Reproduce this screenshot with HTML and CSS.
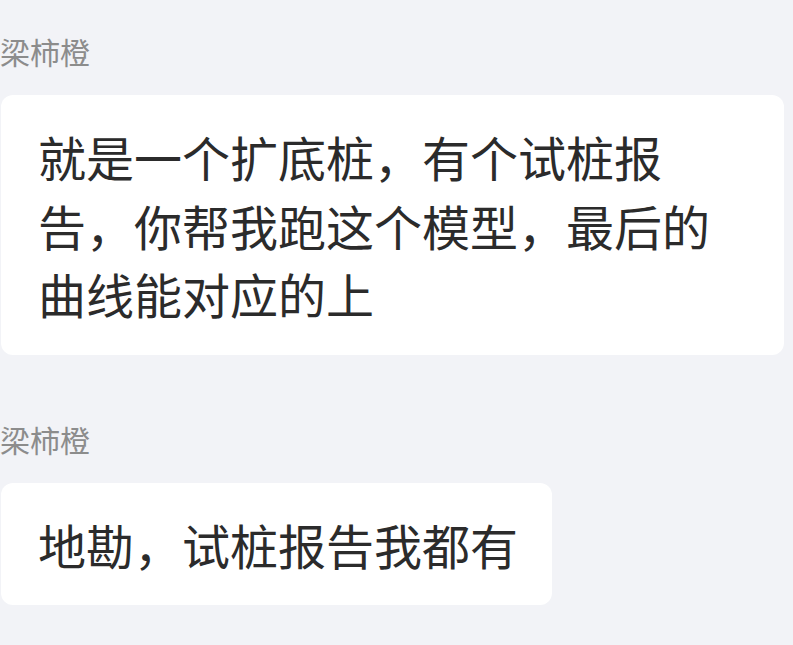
FILE: index.html
```html
<!DOCTYPE html>
<html lang="zh-CN">
<head>
<meta charset="utf-8">
<title>Chat</title>
<link rel="stylesheet" href="styles.css">
</head>
<body>
<div class="chat">
  <div class="msg">
    <div class="name">梁柿橙</div>
    <div class="bubble">就是一个扩底桩，有个试桩报告，你帮我跑这个模型，最后的曲线能对应的上</div>
  </div>
  <div class="msg">
    <div class="name">梁柿橙</div>
    <div class="bubble">地勘，试桩报告我都有</div>
  </div>
</div>
</body>
</html>
```
FILE: styles.css
```css
html, body {
  margin: 0;
  padding: 0;
  background: #f2f3f7;
}
body {
  font-family: "Noto Sans CJK SC", "Noto Sans", sans-serif;
  width: 793px;
  height: 645px;
  overflow: hidden;
}
.chat {
  display: flex;
  flex-direction: column;
  gap: 64px;
  padding: 31px 0 0 1px;
}
.msg {
  display: flex;
  flex-direction: column;
  align-items: flex-start;
  gap: 24px;
}
.name {
  font-size: 30px;
  line-height: 40px;
  color: #8c8c8c;
  margin-left: -1px;
}
.bubble {
  background: #ffffff;
  border-radius: 12px;
  max-width: 783px;
  box-sizing: border-box;
  padding: 27px 34px 27px 37px;
  font-size: 48px;
  line-height: 68.5px;
  color: #2b2b2b;
}
```
